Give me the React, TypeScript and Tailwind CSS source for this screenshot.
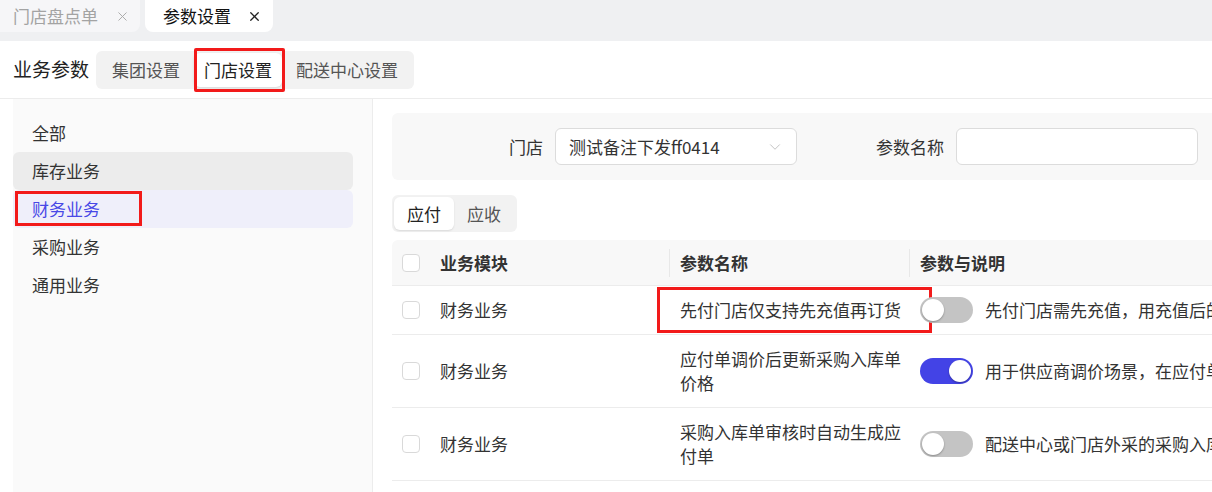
import { X, ChevronDown } from "lucide-react"

type Row = {
  module: string
  name: string
  on: boolean
  desc: string
  tall?: boolean
  mark?: boolean
}

const rows: Row[] = [
  { module: "财务业务", name: "先付门店仅支持先充值再订货", on: false, desc: "先付门店需先充值，用充值后的余额进行订货，余额不足时无法提交订货单", mark: true },
  { module: "财务业务", name: "应付单调价后更新采购入库单价格", on: true, desc: "用于供应商调价场景，在应付单调价后同步更新采购入库单价格", tall: true },
  { module: "财务业务", name: "采购入库单审核时自动生成应付单", on: false, desc: "配送中心或门店外采的采购入库单审核时自动生成应付单", tall: true },
]

const menu = ["全部", "库存业务", "财务业务", "采购业务", "通用业务"]

function Toggle({ on }: { on: boolean }) {
  return (
    <div
      className={`relative h-[26px] w-[53px] shrink-0 rounded-full ${on ? "bg-[#4343e6]" : "bg-[#c4c4c4]"}`}
    >
      <div
        className={`absolute top-[2px] h-[22px] w-[22px] rounded-full bg-white shadow-[0_1px_2px_rgba(0,0,0,0.3)] ${on ? "left-[29px]" : "left-[2px]"}`}
      />
    </div>
  )
}

function Box() {
  return <div className="h-[18px] w-[18px] shrink-0 rounded-[4px] border border-[#d9d9d9] bg-white" />
}

export default function App() {
  return (
    <div className="h-[492px] w-[1212px] overflow-hidden bg-white font-['Noto_Sans_CJK_SC',sans-serif] text-[17px] text-[#333]">
      {/* tabs */}
      <div className="flex h-[41px] items-start bg-[#eff0f2]">
        <div className="flex h-8 w-[140px] shrink-0 items-center rounded-br-lg bg-[#f6f6f8] pl-[13px] text-[#a3a3a3]">
          <span>门店盘点单</span>
          <X size={15} strokeWidth={1.5} className="ml-[17px] text-[#a8a8a8]" />
        </div>
        <div className="ml-[5px] flex h-8 w-[128px] shrink-0 items-center rounded-b-lg bg-white pl-[18px] text-[#111]">
          <span>参数设置</span>
          <X size={15} strokeWidth={2} className="ml-[16px] text-[#222]" />
        </div>
      </div>

      {/* header */}
      <div className="flex h-[58px] items-center border-b border-[#ececec] pl-[13px]">
        <span className="text-[19px] text-[#222]">业务参数</span>
        <div className="ml-[7px] flex h-[38px] items-center rounded-md bg-[#f2f2f2] px-[2px] text-[#555]">
          <div className="px-[14px]">集团设置</div>
          <div className="relative flex h-[34px] items-center rounded-md bg-white px-[10px] text-[#222] shadow-[0_1px_3px_rgba(0,0,0,0.12)]">
            门店设置
            <div className="absolute left-0 -top-[5px] h-[44px] w-[91px] rounded-[2px] border-[3px] border-[#f21a1a]" />
          </div>
          <div className="px-[14px]">配送中心设置</div>
        </div>
      </div>

      <div className="flex h-[393px]">
        {/* sidebar */}
        <div className="ml-[13px] w-[360px] shrink-0 border-r border-[#ececec] bg-[#fafafa] pr-[19px] pt-[15px]">
          {menu.map((m) => {
            const gray = m === "库存业务"
            const act = m === "财务业务"
            return (
              <div
                key={m}
                className={`relative flex h-[38px] items-center rounded-md pl-[19px] ${gray ? "bg-[#ececec]" : ""} ${act ? "bg-[#efeffa] text-[#4848e6]" : ""}`}
              >
                {m}
                {act && (
                  <div className="absolute left-[2px] top-[1px] h-[35px] w-[127px] border-[3px] border-[#f21a1a]" />
                )}
              </div>
            )
          })}
        </div>

        {/* main */}
        <div className="min-w-0 flex-1 overflow-hidden pl-[19px] pt-[14px]">
          <div className="flex h-[67px] w-[900px] items-center rounded-md bg-[#f8f8f8]">
            <div className="w-[163px] shrink-0 pr-3 text-right">门店</div>
            <div className="flex h-[37px] w-[242px] shrink-0 items-center justify-between rounded-md border border-[#dcdcdc] bg-white pl-[13px] pr-[12px]">
              <span>测试备注下发ff0414</span>
              <ChevronDown size={18} strokeWidth={1.2} className="text-[#bdbdbd]" />
            </div>
            <div className="w-[159px] shrink-0 pr-3 text-right">参数名称</div>
            <div className="h-[37px] w-[242px] shrink-0 rounded-md border border-[#dcdcdc] bg-white" />
          </div>

          <div className="mt-[15px] flex h-[37px] w-[125px] items-center rounded-md bg-[#f2f2f2] px-[2px] text-[#555]">
            <div className="flex h-[33px] items-center rounded-md bg-white px-[13px] text-[#222] shadow-[0_1px_2px_rgba(0,0,0,0.1)]">应付</div>
            <div className="px-[13px]">应收</div>
          </div>

          <div className="mt-[8px] w-[1000px]">
            <div className="flex h-[46px] items-center rounded-t-md border-b border-[#ececec] bg-[#f8f8f8] font-bold text-[#333]">
              <div className="flex w-[277px] shrink-0 items-center pl-[10px]">
                <Box />
                <span className="ml-[20px]">业务模块</span>
              </div>
              <div className="h-[28px] w-px shrink-0 bg-[#e8e8e8]" />
              <div className="w-[239px] shrink-0 pl-[10px]">参数名称</div>
              <div className="h-[28px] w-px shrink-0 bg-[#e8e8e8]" />
              <div className="pl-[10px]">参数与说明</div>
            </div>
            {rows.map((r) => (
              <div
                key={r.name}
                className={`flex items-center border-b border-[#ececec] ${r.tall ? "h-[73px]" : "h-[49px]"}`}
              >
                <div className="flex w-[277px] shrink-0 items-center pl-[10px]">
                  <Box />
                  <span className="ml-[20px]">{r.module}</span>
                </div>
                <div className="relative flex h-full w-[240px] shrink-0 items-center pl-[11px] leading-[24px]">
                  {r.name}
                  {r.mark && (
                    <div className="absolute -left-[12px] top-[1px] h-[46px] w-[275px] border-[3px] border-[#f21a1a]" />
                  )}
                </div>
                <div className="flex items-center whitespace-nowrap pl-[11px]">
                  <Toggle on={r.on} />
                  <span className="ml-[12px]">{r.desc}</span>
                </div>
              </div>
            ))}
          </div>
        </div>
      </div>
    </div>
  )
}
